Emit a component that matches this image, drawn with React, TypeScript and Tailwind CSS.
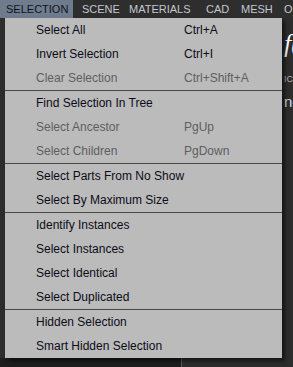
import React from 'react';

type Item = { label: string; shortcut?: string; disabled?: boolean };

const groups: Item[][] = [
  [
    { label: 'Select All', shortcut: 'Ctrl+A' },
    { label: 'Invert Selection', shortcut: 'Ctrl+I' },
    { label: 'Clear Selection', shortcut: 'Ctrl+Shift+A', disabled: true },
  ],
  [
    { label: 'Find Selection In Tree' },
    { label: 'Select Ancestor', shortcut: 'PgUp', disabled: true },
    { label: 'Select Children', shortcut: 'PgDown', disabled: true },
  ],
  [{ label: 'Select Parts From No Show' }, { label: 'Select By Maximum Size' }],
  [
    { label: 'Identify Instances' },
    { label: 'Select Instances' },
    { label: 'Select Identical' },
    { label: 'Select Duplicated' },
  ],
  [{ label: 'Hidden Selection' }, { label: 'Smart Hidden Selection' }],
];

function MenuRow({ label, shortcut, disabled }: Item) {
  return (
    <div
      className={`flex h-[24px] items-center text-[12px] ${
        disabled ? 'text-[#5e5e5e]' : 'text-[#0c0c18]'
      }`}
    >
      <span className="w-[179px] shrink-0 pl-[31px] whitespace-nowrap">{label}</span>
      {shortcut && <span className="whitespace-nowrap">{shortcut}</span>}
    </div>
  );
}

export default function App() {
  return (
    <div
      className="relative flex h-[367px] w-[293px] flex-col overflow-hidden bg-[#2d2d2d]"
      style={{ fontFamily: '"Liberation Sans", Arial, sans-serif' }}
    >
      {/* menubar */}
      <div className="flex h-[18px] shrink-0 items-center bg-[#2e2e2e] text-[11px] leading-[18px] text-[#c4c7ce]">
        <div className="h-full w-[73px] bg-[#6f7c8e] pl-[6px] text-[#10131a]">SELECTION</div>
        <div className="w-[50px] pl-[9px]">SCENE</div>
        <div className="w-[77px] pl-[6px]">MATERIALS</div>
        <div className="w-[35px] pl-[6px]">CAD</div>
        <div className="w-[43px] pl-[6px]">MESH</div>
        <div className="pl-[6px]">O</div>
      </div>

      {/* page behind the menu */}
      <div className="flex flex-1 flex-col">
        <div className="flex flex-1">
          <div className="w-[282px] shrink-0" />
          <div className="flex flex-1 flex-col overflow-hidden pl-[2px]">
            <div
              className="mt-[12px] text-[26px] leading-[28px] text-white italic"
              style={{ fontFamily: '"Liberation Serif", serif' }}
            >
              f(
            </div>
            <div className="mt-[16px] text-[9px] leading-[10px] text-[#a9b3c2]">ICT</div>
            <div className="mt-[10px] text-[15px] leading-[16px] text-[#dcdcdc]">no</div>
          </div>
        </div>
        <div className="flex h-[9px] shrink-0">
          <div className="w-[182px] border-r border-[#5c5c5c] bg-[#1e1e1e]" />
          <div className="flex-1 bg-[#2d2d2d]" />
        </div>
      </div>

      {/* dropdown */}
      <div className="absolute top-[18px] left-[5px] w-[277px] bg-[#bbbbbb] shadow-[3px_3px_4px_rgba(0,0,0,0.55)]">
        {groups.map((g, i) => (
          <div key={i} className={i > 0 ? 'border-t border-[#474747]' : ''}>
            {g.map((it) => (
              <MenuRow key={it.label} {...it} />
            ))}
          </div>
        ))}
      </div>
    </div>
  );
}
